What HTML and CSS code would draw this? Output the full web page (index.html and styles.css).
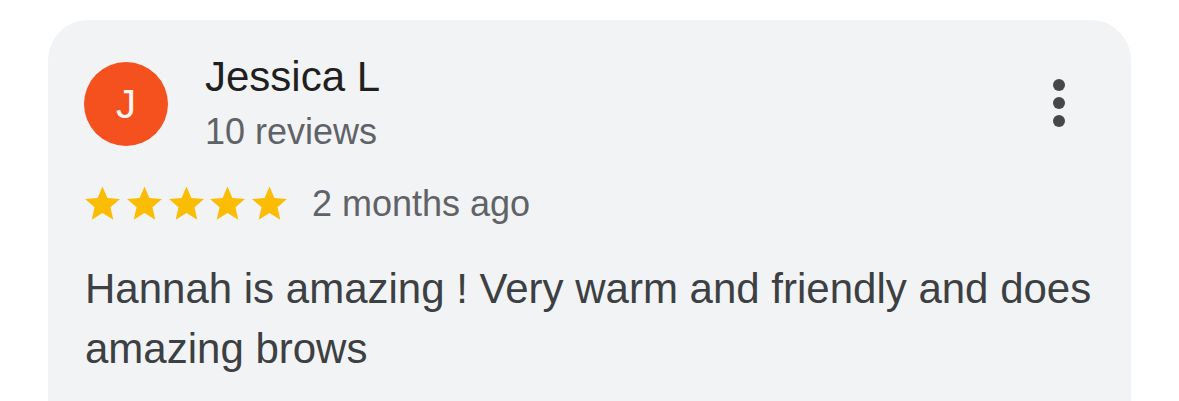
FILE: index.html
```html
<!DOCTYPE html>
<html lang="en">
<head>
<meta charset="utf-8">
<title>Review</title>
<link rel="stylesheet" href="styles.css">
</head>
<body>
<div class="card">
  <div class="header">
    <div class="avatar">J</div>
    <div class="info">
      <div class="name">Jessica L</div>
      <div class="count">10 reviews</div>
    </div>
    <div class="menu" aria-label="More options">
      <span class="dot"></span><span class="dot"></span><span class="dot"></span>
    </div>
  </div>
  <div class="rating">
    <div class="stars">
      <svg class="star" viewBox="2 2 20 19"><path d="M12 17.27L18.18 21l-1.64-7.03L22 9.24l-7.19-.61L12 2 9.19 8.63 2 9.24l5.46 4.73L5.82 21z"/></svg>
      <svg class="star" viewBox="2 2 20 19"><path d="M12 17.27L18.18 21l-1.64-7.03L22 9.24l-7.19-.61L12 2 9.19 8.63 2 9.24l5.46 4.73L5.82 21z"/></svg>
      <svg class="star" viewBox="2 2 20 19"><path d="M12 17.27L18.18 21l-1.64-7.03L22 9.24l-7.19-.61L12 2 9.19 8.63 2 9.24l5.46 4.73L5.82 21z"/></svg>
      <svg class="star" viewBox="2 2 20 19"><path d="M12 17.27L18.18 21l-1.64-7.03L22 9.24l-7.19-.61L12 2 9.19 8.63 2 9.24l5.46 4.73L5.82 21z"/></svg>
      <svg class="star" viewBox="2 2 20 19"><path d="M12 17.27L18.18 21l-1.64-7.03L22 9.24l-7.19-.61L12 2 9.19 8.63 2 9.24l5.46 4.73L5.82 21z"/></svg>
    </div>
    <span class="date">2 months ago</span>
  </div>
  <p class="text">Hannah is amazing ! Very warm and friendly and does amazing brows</p>
</div>
</body>
</html>
```
FILE: styles.css
```css
html, body {
  margin: 0;
  padding: 0;
  background: #ffffff;
  overflow: hidden;
}
body {
  font-family: "Liberation Sans", Arial, sans-serif;
  padding: 20px 0 0 48px;
}
.card {
  width: 1083px;
  box-sizing: border-box;
  min-height: 440px;
  background: #f2f3f5;
  border-radius: 40px;
  padding: 32px 30px 0 36px;
}
.header {
  display: flex;
  align-items: flex-start;
}
.avatar {
  width: 84px;
  height: 84px;
  margin-top: 10px;
  border-radius: 50%;
  background: #f4511e;
  color: #fff6f2;
  font-size: 40px;
  display: flex;
  align-items: center;
  justify-content: center;
  flex-shrink: 0;
}
.info {
  flex: 1;
  margin-left: 37px;
}
.name {
  font-size: 42px;
  line-height: 50px;
  color: #1f1f1f;
}
.count {
  margin-top: 8px;
  font-size: 36px;
  line-height: 44px;
  color: #5f6368;
}
.menu {
  margin-top: 27px;
  margin-right: 36px;
  display: flex;
  flex-direction: column;
  gap: 6px;
}
.dot {
  width: 12px;
  height: 12px;
  border-radius: 50%;
  background: #474747;
}
.rating {
  display: flex;
  align-items: center;
  margin-top: 28px;
  height: 44px;
  padding-left: 1px;
}
.stars {
  display: flex;
  gap: 6.75px;
  margin-top: -3px;
}
.star {
  width: 35px;
  height: 34px;
  fill: #fbbc04;
}
.date {
  margin-left: 25px;
  font-size: 36px;
  line-height: 44px;
  color: #5f6368;
}
.text {
  margin: 33px 0 0 1px;
  font-size: 42px;
  line-height: 60px;
  color: #3c4043;
}
```
